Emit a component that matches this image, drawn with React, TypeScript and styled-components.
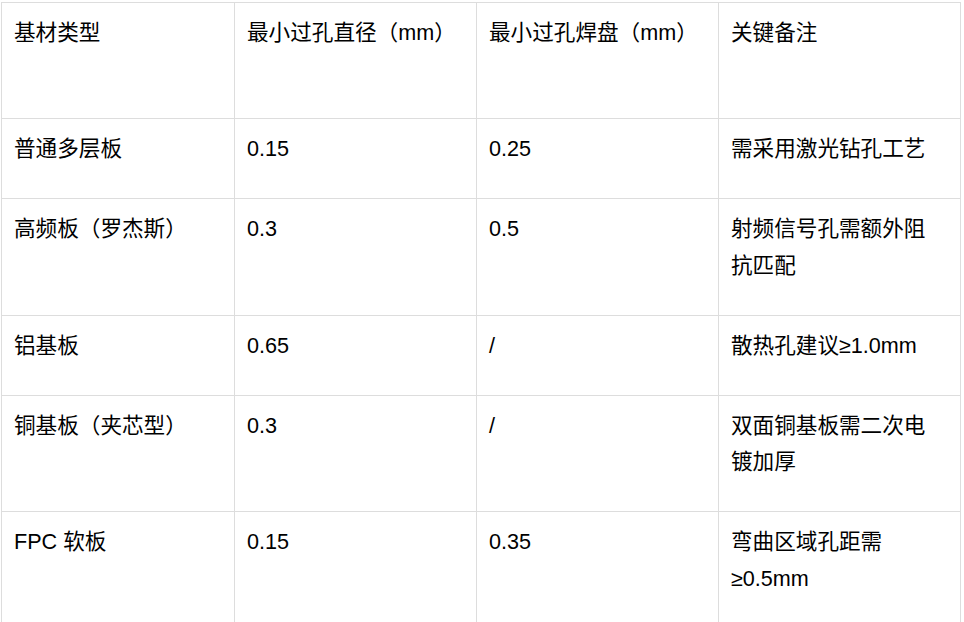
import React from "react";
import styled, { createGlobalStyle } from "styled-components";

const GlobalStyle = createGlobalStyle`
  html, body {
    margin: 0;
    padding: 0;
    background: #ffffff;
  }
  body {
    font-family: "Liberation Sans", Arial, "Noto Sans CJK SC", sans-serif;
  }
`;

const Page = styled.div`
  padding: 2px 0 0 1px;
  background: #ffffff;
`;

const Grid = styled.div`
  display: grid;
  grid-template-columns: 233px 242px 242px 243px;
  width: 960px;
`;

const Cell = styled.div<{ $header?: boolean; $last?: boolean }>`
  box-sizing: border-box;
  border-top: 1px solid #dddddd;
  border-left: 1px solid #dddddd;
  border-right: ${(p) => (p.$last ? "1px solid #dddddd" : "none")};
  padding: 12px ${(p) => (p.$last ? "24px" : "12px")} 30.5px 12px;
  min-height: ${(p) => (p.$header ? "116px" : "80px")};
  font-family: "Liberation Sans", Arial, "Noto Sans CJK SC", sans-serif;
  font-size: 21.6px;
  line-height: 36.5px;
  color: #000000;
  word-break: normal;
  overflow-wrap: normal;
`;

const headers = ["基材类型", "最小过孔直径（mm）", "最小过孔焊盘（mm）", "关键备注"];

const rows: string[][] = [
  ["普通多层板", "0.15", "0.25", "需采用激光钻孔工艺"],
  ["高频板（罗杰斯）", "0.3", "0.5", "射频信号孔需额外阻抗匹配"],
  ["铝基板", "0.65", "/", "散热孔建议≥1.0mm"],
  ["铜基板（夹芯型）", "0.3", "/", "双面铜基板需二次电镀加厚"],
  ["FPC 软板", "0.15", "0.35", "弯曲区域孔距需≥0.5mm"],
];

export default function App() {
  return (
    <Page>
      <GlobalStyle />
      <Grid>
        {headers.map((h, i) => (
          <Cell key={`h${i}`} $header $last={i === 3}>
            {h}
          </Cell>
        ))}
        {rows.map((r, ri) =>
          r.map((c, ci) => (
            <Cell key={`r${ri}c${ci}`} $last={ci === 3}>
              {c}
            </Cell>
          ))
        )}
      </Grid>
    </Page>
  );
}
